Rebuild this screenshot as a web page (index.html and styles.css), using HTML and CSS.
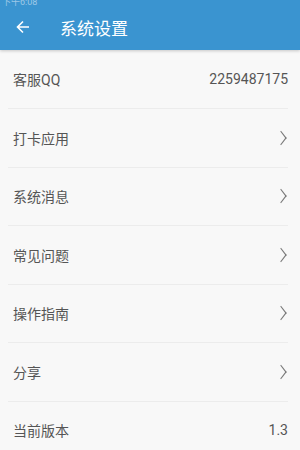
FILE: index.html
```html
<!DOCTYPE html>
<html lang="zh-CN">
<head>
    <meta charset="UTF-8">
    <title>系统设置</title>
    <link rel="stylesheet" href="styles.css">
</head>
<body>
    <div class="header">
        <span class="status">下午6:08</span>
        <svg class="back" width="14" height="14" viewBox="0 0 14 14">
            <path d="M13 7H1.5M7 1.5L1.5 7 7 12.5" fill="none" stroke="#fff" stroke-width="1.6"/>
        </svg>
        <span class="title">系统设置</span>
    </div>
    <ul class="list">
        <li class="item"><span>客服QQ</span><span class="value">2259487175</span></li>
        <li class="item"><span>打卡应用</span><i class="arrow"></i></li>
        <li class="item"><span>系统消息</span><i class="arrow"></i></li>
        <li class="item"><span>常见问题</span><i class="arrow"></i></li>
        <li class="item"><span>操作指南</span><i class="arrow"></i></li>
        <li class="item"><span>分享</span><i class="arrow"></i></li>
        <li class="item"><span>当前版本</span><span class="value">1.3</span></li>
    </ul>
</body>
</html>
```

FILE: styles.css
```css
body{
    margin: 0;
    background: #f8f8f8;
    font-family: Roboto, "Noto Sans CJK SC", sans-serif;
    overflow: hidden;
}
.header{
    position: relative;
    height: 50px;
    background: #3a94d0;
    display: flex;
    align-items: center;
    padding-left: 16px;
    box-shadow: 0 1px 3px rgba(0,0,0,.2);
}
.status{
    position: absolute;
    left: 2px;
    top: -5px;
    font-size: 9px;
    color: rgba(255,255,255,.5);
}
.back{
    margin-top: 4px;
}
.title{
    margin-left: 30px;
    margin-top: 4px;
    color: #fff;
    font-size: 17px;
}
.list{
    list-style: none;
    margin: 0 12px 0 8px;
    padding: 0;
}
.item{
    height: 57.5px;
    border-bottom: 1px solid #ececec;
    display: flex;
    align-items: center;
    justify-content: space-between;
    padding-left: 5px;
    font-size: 14px;
    color: #555;
}
.item:first-child{
    height: 58px;
}
.item:last-child{
    border-bottom: none;
}
.value{
    color: #555;
}
.arrow{
    width: 7px;
    height: 7px;
    border-top: 1px solid #777;
    border-right: 1px solid #777;
    transform: scaleY(1.3) rotate(45deg);
    margin-right: 3px;
}
```
